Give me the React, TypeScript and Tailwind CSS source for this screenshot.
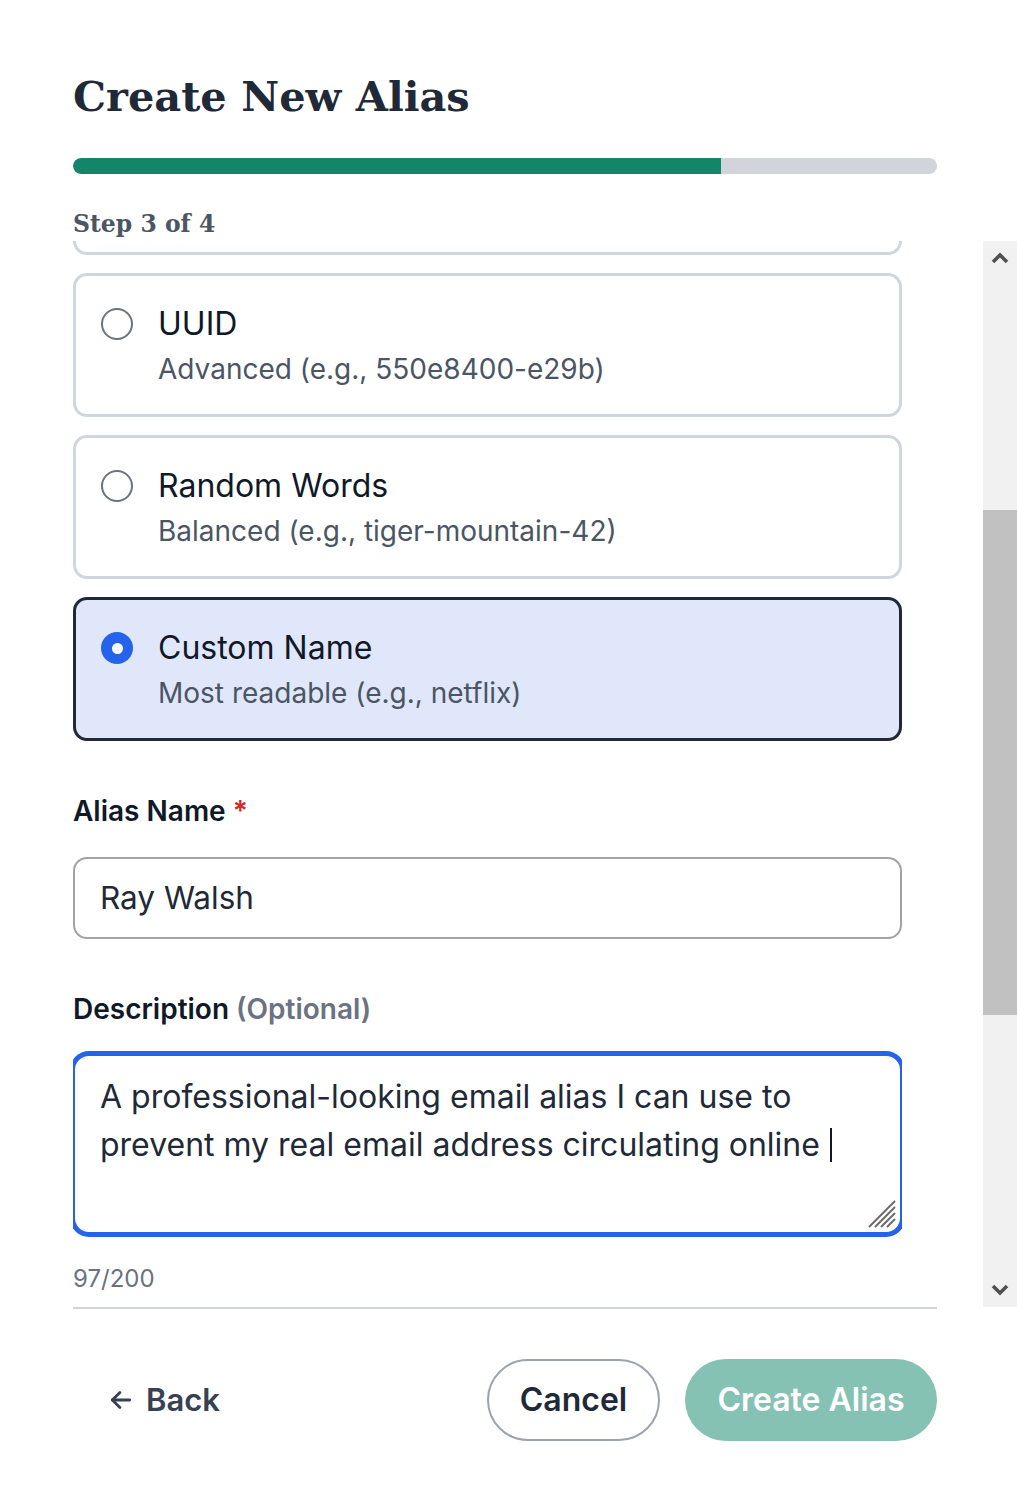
import React from "react";

function Radio({ checked }: { checked?: boolean }) {
  if (checked) {
    return (
      <div className="mt-[2px] flex h-[32px] w-[32px] shrink-0 items-center justify-center rounded-full bg-[#2563eb]">
        <div className="h-[11px] w-[11px] rounded-full bg-white" />
      </div>
    );
  }
  return <div className="mt-[2px] h-[32px] w-[32px] shrink-0 rounded-full border-2 border-[#6b7280] bg-white" />;
}

function OptionCard({ title, sub, checked }: { title: string; sub: string; checked?: boolean }) {
  return (
    <div
      className={
        checked
          ? "flex h-[144px] shrink-0 items-start gap-[25px] rounded-[14px] border-[3px] border-[#1f2937] bg-[#e0e7fa] pl-[25px] pt-[30px]"
          : "flex h-[144px] shrink-0 items-start gap-[25px] rounded-[14px] border-[3px] border-[#cfd6de] bg-white pl-[25px] pt-[30px]"
      }
    >
      <Radio checked={checked} />
      <div className="flex flex-col">
        <div className="text-[32px] leading-[36px] text-[#111827]">{title}</div>
        <div className="mt-[10px] text-[28px] leading-[34px] text-[#4b5563]">{sub}</div>
      </div>
    </div>
  );
}

export default function App() {
  return (
    <div className="flex h-[1506px] w-[1017px] flex-col overflow-hidden bg-white font-['Inter',sans-serif]">
      <div className="flex flex-col pl-[73px] pt-[69px]">
        <h1 className="font-['DejaVu_Serif',serif] text-[41.5px] font-bold leading-[56px] text-[#1f2937]">
          Create New Alias
        </h1>
        <div className="mt-[33px] flex h-[16px] w-[864px] overflow-hidden rounded-full bg-[#d1d5db]">
          <div className="h-full w-[75%] rounded-l-full bg-[#138667]" />
        </div>
        <div className="mt-[34px] font-['DejaVu_Serif',serif] text-[23.5px] font-bold leading-[32px] text-[#4b5563]">
          Step 3 of 4
        </div>
      </div>

      <div className="mt-[1px] flex h-[1066px] pl-[73px]">
        <div className="flex w-[829px] flex-col overflow-hidden">
          <div className="mt-[-130px] flex flex-col">
            <div className="flex flex-col gap-[18px]">
              <OptionCard title="Short Code" sub="Shortest (e.g., k7x2m9)" />
              <OptionCard title="UUID" sub="Advanced (e.g., 550e8400-e29b)" />
              <OptionCard title="Random Words" sub="Balanced (e.g., tiger-mountain-42)" />
              <OptionCard title="Custom Name" sub="Most readable (e.g., netflix)" checked />
            </div>

            <div className="mt-[54px] text-[28px] font-semibold leading-[32px] text-[#111827]">
              Alias Name <span className="text-[#dc2626]">*</span>
            </div>
            <div className="mt-[30px] flex h-[82px] items-center rounded-[14px] border-2 border-[#a3a3a3] bg-white px-[25px] text-[31.5px] text-[#1f2937]">
              Ray Walsh
            </div>

            <div className="mt-[54px] text-[28px] font-semibold leading-[32px] text-[#111827]">
              Description <span className="text-[#6b7280]">(Optional)</span>
            </div>
            <div className="relative mt-[29px] h-[180px] rounded-[16px] border-2 border-[#2563eb] bg-white px-[25px] pt-[17px] text-[32px] leading-[48px] text-[#1f2937] shadow-[0_0_0_3px_#2563eb]">
              A professional-looking email alias I can use to prevent my real email address circulating online
              <span className="ml-[10px] inline-block h-[34px] w-[2px] translate-y-[6px] bg-[#111827]" />
              <svg className="absolute bottom-[3px] right-[3px]" width="30" height="30" viewBox="0 0 30 30">
                <line x1="28" y1="2" x2="2" y2="28" stroke="#6b6b6b" strokeWidth="2" />
                <line x1="28" y1="8" x2="8" y2="28" stroke="#6b6b6b" strokeWidth="2" />
                <line x1="28" y1="14" x2="14" y2="28" stroke="#6b6b6b" strokeWidth="2" />
                <line x1="28" y1="20" x2="20" y2="28" stroke="#6b6b6b" strokeWidth="2" />
              </svg>
            </div>
            <div className="mt-[31px] text-[24px] leading-[28px] text-[#6b7280]">97/200</div>
            <div className="h-[200px]" />
          </div>
        </div>
        <div className="flex-1" />
        <div className="flex w-[34px] flex-col bg-[#f1f1f1]">
          <div className="flex h-[34px] items-center justify-center">
            <svg width="18" height="12" viewBox="0 0 18 12">
              <polyline points="2,10 9,3 16,10" fill="none" stroke="#505050" strokeWidth="3.6" />
            </svg>
          </div>
          <div className="flex-1">
            <div className="mt-[235px] h-[505px] w-full bg-[#c1c1c1]" />
          </div>
          <div className="flex h-[34px] items-center justify-center">
            <svg width="18" height="12" viewBox="0 0 18 12">
              <polyline points="2,2 9,9 16,2" fill="none" stroke="#505050" strokeWidth="3.6" />
            </svg>
          </div>
        </div>
      </div>

      <div className="ml-[73px] h-[2px] w-[864px] bg-[#d1d5db]" />

      <div className="ml-[73px] flex w-[864px] items-center justify-between pt-[50px]">
        <button className="flex h-[82px] items-center gap-[12px] pl-[35px] text-[31px] font-semibold text-[#374151]">
          <svg width="26" height="26" viewBox="0 0 24 24" fill="none" stroke="#374151" strokeWidth="2.6" strokeLinecap="round" strokeLinejoin="round">
            <path d="M20 12H4" />
            <path d="M11 19l-7-7 7-7" />
          </svg>
          Back
        </button>
        <div className="flex items-center gap-[25px]">
          <button className="flex h-[82px] w-[173px] items-center justify-center rounded-full border-2 border-[#9ca3af] bg-white text-[32px] font-semibold text-[#1f2937]">
            Cancel
          </button>
          <button className="flex h-[82px] w-[252px] items-center justify-center rounded-full bg-[#85c2b4] text-[32px] font-semibold text-white">
            Create Alias
          </button>
        </div>
      </div>
    </div>
  );
}
